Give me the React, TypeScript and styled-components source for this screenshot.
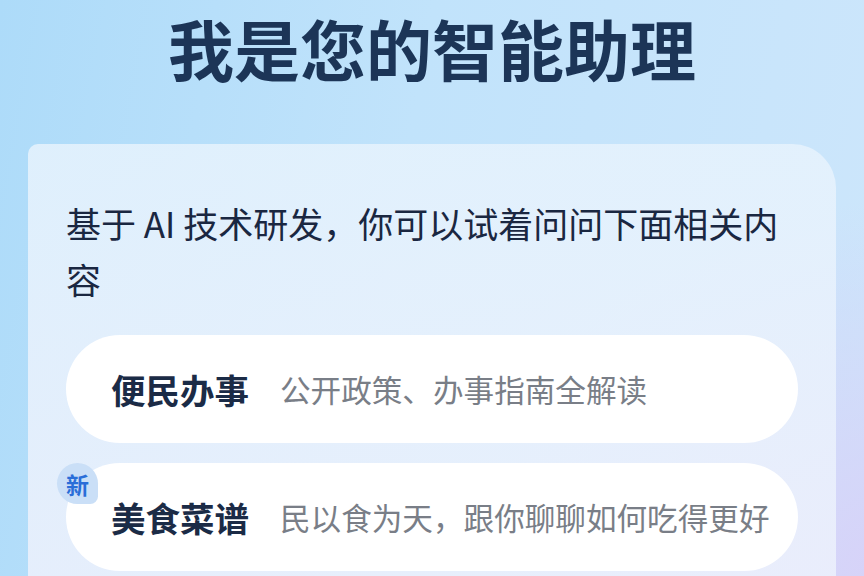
import * as React from 'react';
import styled, { createGlobalStyle } from 'styled-components';

const GlobalStyle = createGlobalStyle`
    html, body {
        margin: 0;
        padding: 0;
        height: 100%;
    }
    body {
        font-family: "Noto Sans CJK SC", "Noto Sans", sans-serif;
        overflow: hidden;
    }
    #root {
        height: 100%;
    }
`

const Page = styled.div`
    width: 864px;
    height: 576px;
    box-sizing: border-box;
    padding: 0 28px;
    overflow: hidden;
    background:
        radial-gradient(ellipse 420px 380px at 900px 580px, rgba(216, 208, 248, 0.95), rgba(216, 208, 248, 0) 100%),
        linear-gradient(100deg, #addbf9 0%, #c1e3fb 45%, #cde6fb 100%);
`
const Heading = styled.h1`
    margin: 0;
    height: 94px;
    line-height: 94px;
    text-align: center;
    font-size: 66px;
    font-weight: 700;
    color: #1c3557;
`
const Card = styled.div`
    margin-top: 50px;
    height: 500px;
    box-sizing: border-box;
    padding: 51px 38px 0;
    border-radius: 10px 44px 0 0;
    background: linear-gradient(180deg, rgba(231, 243, 253, 0.85) 0%, rgba(237, 240, 252, 0.88) 100%);
`
const Intro = styled.p`
    margin: 0 0 28px;
    font-size: 35px;
    line-height: 56px;
    color: #1a2741;
`
const List = styled.div`
    display: flex;
    flex-direction: column;
    gap: 20px;
`
const Pill = styled.div`
    position: relative;
    height: 108px;
    box-sizing: border-box;
    padding: 0 40px 0 45px;
    display: flex;
    align-items: center;
    gap: 31px;
    border-radius: 54px;
    background: #ffffff;
    white-space: nowrap;
`
const PillTitle = styled.span`
    font-size: 34.5px;
    font-weight: 700;
    color: #1b2b46;
`
const PillDesc = styled.span`
    font-size: 30.6px;
    color: #797e87;
`
const Badge = styled.span`
    position: absolute;
    left: -9px;
    top: 0;
    width: 41px;
    height: 41px;
    display: flex;
    align-items: center;
    justify-content: center;
    border-radius: 21px 21px 8px 21px;
    background: #cadff7;
    color: #2a6ed8;
    font-size: 23px;
    font-weight: 700;
`

interface Topic {
    title: string;
    desc: string;
    isNew?: boolean;
}

const topics: Topic[] = [
    { title: '便民办事', desc: '公开政策、办事指南全解读' },
    { title: '美食菜谱', desc: '民以食为天，跟你聊聊如何吃得更好', isNew: true },
]

export default function App() {
    return (
        <>
            <GlobalStyle />
            <Page>
                <Heading>我是您的智能助理</Heading>
                <Card>
                    <Intro>基于 AI 技术研发，你可以试着问问下面相关内容</Intro>
                    <List>
                        {topics.map((t) => (
                            <Pill key={t.title}>
                                {t.isNew && <Badge>新</Badge>}
                                <PillTitle>{t.title}</PillTitle>
                                <PillDesc>{t.desc}</PillDesc>
                            </Pill>
                        ))}
                    </List>
                </Card>
            </Page>
        </>
    )
}
